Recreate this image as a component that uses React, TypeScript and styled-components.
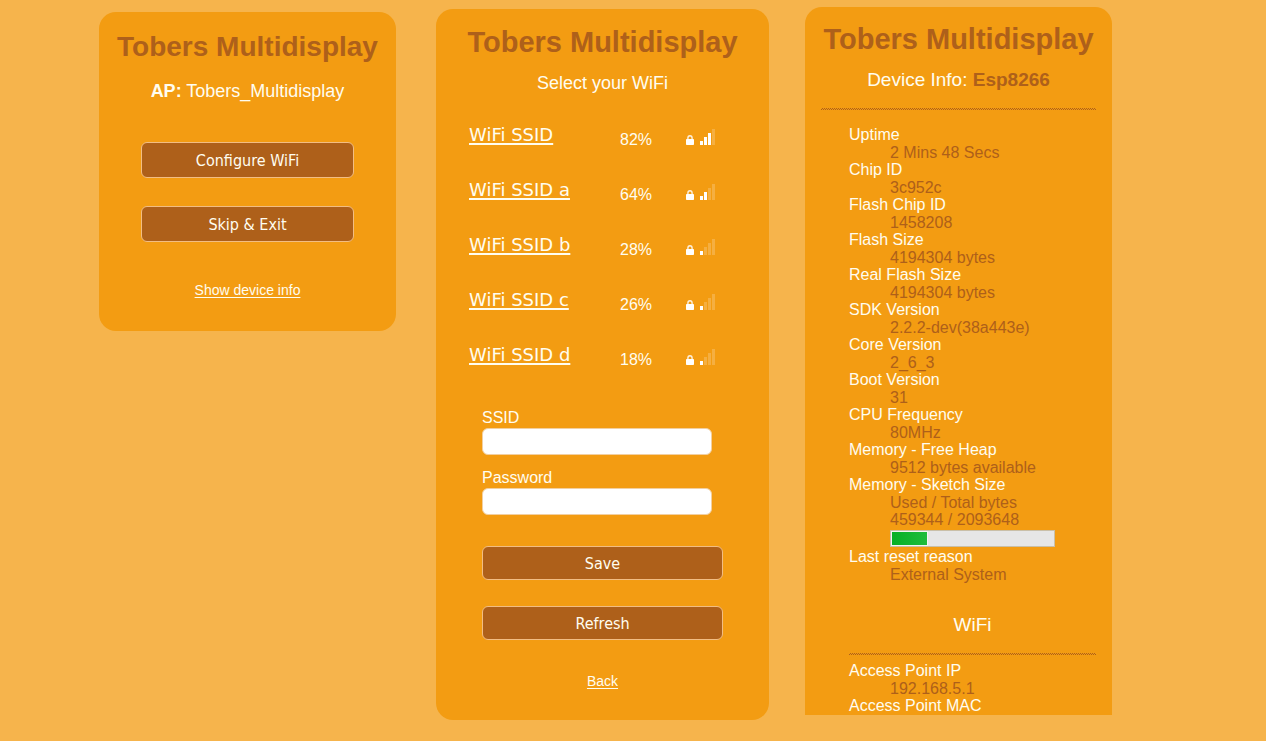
import React from "react";
import styled, { createGlobalStyle } from "styled-components";

const brown = "#ae601a";
const cream = "#fffdf0";

const GlobalStyle = createGlobalStyle`
  *, *::before, *::after { box-sizing: border-box; }
  body {
    margin: 0;
    background: #f6b44c;
    color: ${cream};
    font-family: "Liberation Sans", Arial, sans-serif;
    font-size: 16px;
  }
`;

const Page = styled.main`
  display: grid;
  grid-template-columns: minmax(0, 297fr) minmax(0, 337fr) minmax(0, 307fr);
  column-gap: 36px;
  align-items: start;
  padding: 7px 154px 20px 99px;

  @media (max-width: 1100px) {
    grid-template-columns: minmax(0, 340px);
    justify-content: center;
    row-gap: 24px;
    padding: 16px;
  }
`;

const Card = styled.section`
  background: #f39c12;
  border-radius: 17px;
`;

const StartCard = styled(Card)`
  margin-top: 5px;
  padding: 18px 16px 32px;
  text-align: center;
`;

const WifiCard = styled(Card)`
  margin: 2px 0 0 4px;
  padding: 16px 31px 30px;
`;

const InfoCard = styled(Card)`
  padding: 15px 16px 0;
  border-radius: 17px 17px 0 0;
`;

const Title = styled.h1<{ $size?: number }>`
  margin: 0;
  color: ${brown};
  font-size: ${(p) => p.$size ?? 29}px;
  line-height: 34px;
  text-align: center;
  white-space: nowrap;
`;

const Subtitle = styled.h2<{ $size?: number; $gap?: number }>`
  margin: ${(p) => p.$gap ?? 13}px 0 0;
  font-size: ${(p) => p.$size ?? 18}px;
  line-height: 22px;
  font-weight: 400;
  text-align: center;
`;

const Accent = styled.strong`
  color: ${brown};
`;

const Button = styled.button<{ $height?: number }>`
  display: block;
  width: 100%;
  height: ${(p) => p.$height ?? 34}px;
  padding: 0;
  border: 1px solid #f2bd83;
  border-radius: 6px;
  background: ${brown};
  color: ${cream};
  font-family: "DejaVu Sans Condensed", Tahoma, sans-serif;
  font-size: 16px;
  cursor: pointer;
`;

const StartActions = styled.div`
  display: grid;
  row-gap: 28px;
  margin: 40px 26px 39px;
`;

const SmallLink = styled.a`
  color: inherit;
  font-size: 14px;
  line-height: 18px;
  text-underline-offset: 2px;
`;

const Networks = styled.table`
  width: 100%;
  margin-top: 18px;
  border-collapse: collapse;
  table-layout: fixed;

  td {
    height: 55px;
    padding: 0;
  }
`;

const NameCell = styled.td`
  width: 153px;

  && {
    padding: 0 0 9px 2px;
  }
`;

const PercentCell = styled.td`
  width: 66px;
`;

const SignalCell = styled.td`
  && {
    padding-bottom: 5px;
  }
`;

const NetworkLink = styled.a`
  color: inherit;
  font-family: "DejaVu Sans", Verdana, sans-serif;
  font-size: 18px;
  line-height: 22px;
  text-decoration-thickness: 2px;
  text-underline-offset: 2px;
`;

const SignalIcon = styled.svg`
  display: block;
`;

const WifiForm = styled.form`
  margin: 21px 15px 0;
`;

const Field = styled.div`
  margin-bottom: 13px;
`;

const Label = styled.label`
  display: block;
  line-height: 20px;
`;

const TextInput = styled.input`
  display: block;
  width: calc(100% - 11px);
  height: 27px;
  padding: 2px 8px;
  border: 1px solid #f2cfa0;
  border-radius: 6px;
  background: #fff;
  font-size: 16px;
`;

const FormActions = styled.div`
  display: grid;
  row-gap: 26px;
  margin-top: 31px;
`;

const BackLine = styled.p`
  margin: 32px 0 0;
  text-align: center;
  line-height: 18px;
`;

const Rule = styled.hr`
  height: 2px;
  margin: 17px 0 0;
  border: 0;
  background: repeating-conic-gradient(${brown} 0 25%, transparent 0 50%) 0 0 / 2px 2px;
`;

const Details = styled.div`
  padding-left: 28px;
`;

const InfoList = styled.dl<{ $gap: number }>`
  margin: ${(p) => p.$gap}px 0 0;

  dt {
    line-height: 18px;
  }

  dd {
    margin: 0 0 0 41px;
    color: ${brown};
    line-height: 17px;
  }
`;

const SectionTitle = styled.h3`
  margin: 31px 0 0;
  font-size: 19px;
  line-height: 22px;
  font-weight: 400;
  text-align: center;
`;

const UsageBar = styled.div`
  width: 165px;
  max-width: 100%;
  height: 17px;
  margin: 2px 0 1px;
  padding: 1px;
  border: 1px solid #c9bfa8;
  background: #e6e6e6;
`;

const UsageFill = styled.div`
  height: 100%;
  background: linear-gradient(90deg, #06b025, #1fbc3c);
  box-shadow: 0 0 0 1px #f4f4f4;
`;

const networks = [
  { name: "WiFi SSID", strength: 82 },
  { name: "WiFi SSID a", strength: 64 },
  { name: "WiFi SSID b", strength: 28 },
  { name: "WiFi SSID c", strength: 26 },
  { name: "WiFi SSID d", strength: 18 },
];

const deviceInfo = [
  ["Uptime", "2 Mins 48 Secs"],
  ["Chip ID", "3c952c"],
  ["Flash Chip ID", "1458208"],
  ["Flash Size", "4194304 bytes"],
  ["Real Flash Size", "4194304 bytes"],
  ["SDK Version", "2.2.2-dev(38a443e)"],
  ["Core Version", "2_6_3"],
  ["Boot Version", "31"],
  ["CPU Frequency", "80MHz"],
  ["Memory - Free Heap", "9512 bytes available"],
];

const sketchUsed = 459344;
const sketchTotal = 2093648;

function Signal({ strength }: { strength: number }) {
  const bars = strength > 75 ? 3 : strength > 50 ? 2 : 1;
  return (
    <SignalIcon width="30" height="16" viewBox="0 0 30 16" role="img" aria-label={`Secured, signal ${strength}%`}>
      <path d="M1.9 11V9.1a2.1 2.3 0 0 1 4.2 0V11" fill="none" stroke="#fff" strokeOpacity="0.85" strokeWidth="1.4" />
      <rect x="0" y="10" width="8" height="6" rx="0.8" fill="#fff" />
      {[0, 1, 2, 3].map((i) => (
        <rect
          key={i}
          x={14 + i * 4}
          y={12 - i * 4}
          width="3"
          height={4 + i * 4}
          fill="#fff"
          fillOpacity={i < bars ? 1 : 0.2}
        />
      ))}
    </SignalIcon>
  );
}

export default function App() {
  return (
    <>
      <GlobalStyle />
      <Page>
        <StartCard>
          <Title $size={28}>Tobers Multidisplay</Title>
          <Subtitle $gap={16}>
            <strong>AP:</strong> Tobers_Multidisplay
          </Subtitle>
          <StartActions>
            <Button type="button" $height={36}>Configure WiFi</Button>
            <Button type="button" $height={36}>Skip &amp; Exit</Button>
          </StartActions>
          <SmallLink href="#info">Show device info</SmallLink>
        </StartCard>

        <WifiCard>
          <Title>Tobers Multidisplay</Title>
          <Subtitle>Select your WiFi</Subtitle>
          <Networks>
            <tbody>
              {networks.map((n) => (
                <tr key={n.name}>
                  <NameCell>
                    <NetworkLink href="#ssid">{n.name}</NetworkLink>
                  </NameCell>
                  <PercentCell>{n.strength}%</PercentCell>
                  <SignalCell>
                    <Signal strength={n.strength} />
                  </SignalCell>
                </tr>
              ))}
            </tbody>
          </Networks>
          <WifiForm>
            <Field>
              <Label htmlFor="ssid">SSID</Label>
              <TextInput id="ssid" type="text" />
            </Field>
            <Field>
              <Label htmlFor="password">Password</Label>
              <TextInput id="password" type="password" />
            </Field>
            <FormActions>
              <Button type="button">Save</Button>
              <Button type="button">Refresh</Button>
            </FormActions>
          </WifiForm>
          <BackLine>
            <SmallLink href="#back">Back</SmallLink>
          </BackLine>
        </WifiCard>

        <InfoCard id="info">
          <Title>Tobers Multidisplay</Title>
          <Subtitle $size={19}>
            Device Info: <Accent>Esp8266</Accent>
          </Subtitle>
          <Rule />
          <Details>
            <InfoList $gap={16}>
              {deviceInfo.map(([term, value]) => (
                <React.Fragment key={term}>
                  <dt>{term}</dt>
                  <dd>{value}</dd>
                </React.Fragment>
              ))}
              <dt>Memory - Sketch Size</dt>
              <dd>
                Used / Total bytes
                <br />
                {sketchUsed} / {sketchTotal}
                <UsageBar
                  role="progressbar"
                  aria-label="Sketch size"
                  aria-valuenow={sketchUsed}
                  aria-valuemin={0}
                  aria-valuemax={sketchTotal}
                >
                  <UsageFill style={{ width: `${(sketchUsed / sketchTotal) * 100}%` }} />
                </UsageBar>
              </dd>
              <dt>Last reset reason</dt>
              <dd>External System</dd>
            </InfoList>
            <SectionTitle>WiFi</SectionTitle>
            <Rule />
            <InfoList $gap={7}>
              <dt>Access Point IP</dt>
              <dd>192.168.5.1</dd>
              <dt>Access Point MAC</dt>
            </InfoList>
          </Details>
        </InfoCard>
      </Page>
    </>
  );
}
